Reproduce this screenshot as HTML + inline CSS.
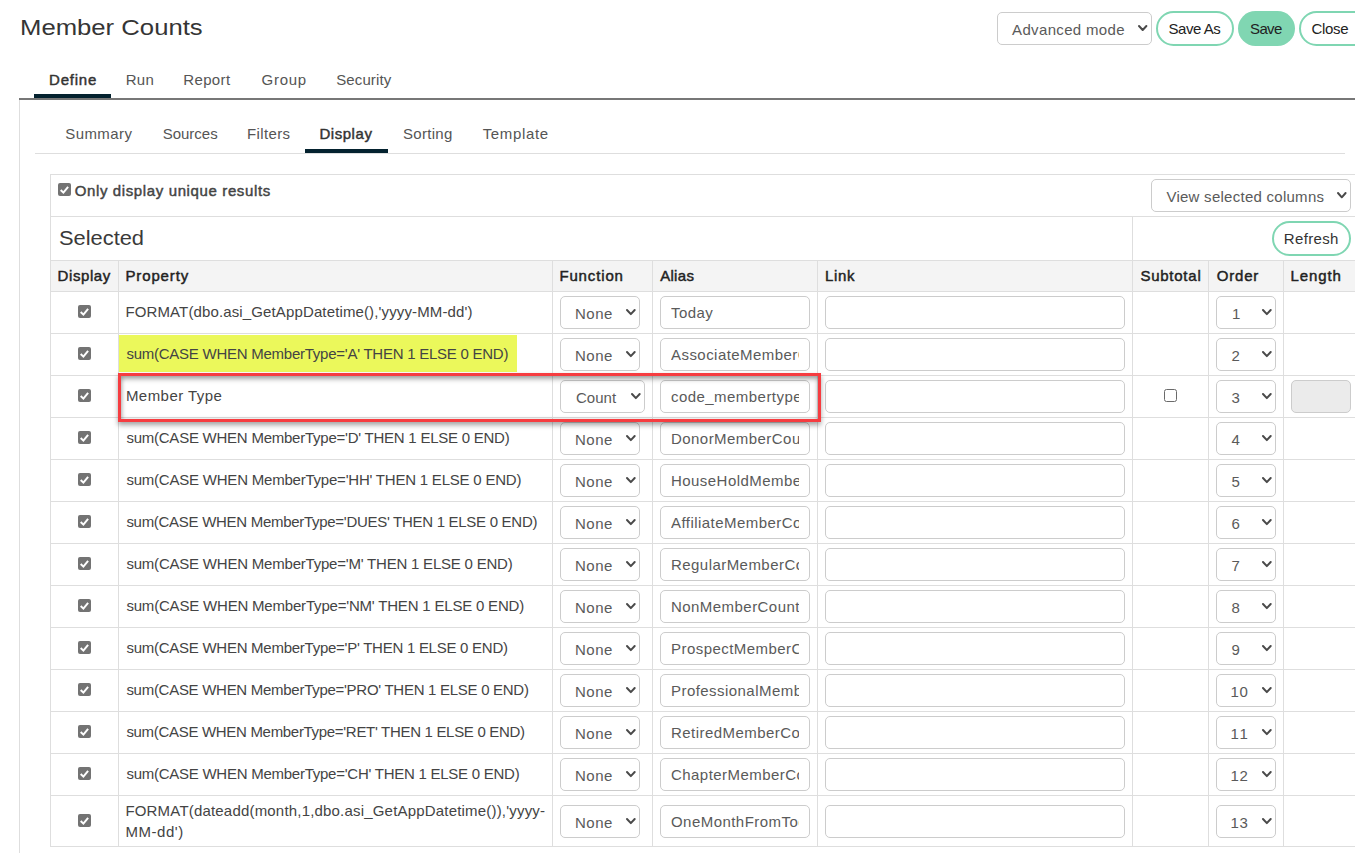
<!DOCTYPE html>
<html><head><meta charset="utf-8"><style>
html,body{margin:0;padding:0;background:#fff;}
body{width:1355px;height:862px;overflow:hidden;position:relative;font-family:"Liberation Sans", sans-serif;}
.t{position:absolute;white-space:nowrap;}
.r{position:absolute;}
</style></head><body>
<div class="t" style="left:19.83px;top:17px;font-size:22px;line-height:22px;font-weight:400;color:#353535;letter-spacing:0.000px;transform:scaleX(1.1672);transform-origin:0px 0;">Member Counts</div>
<div class="r" style="left:997px;top:12px;width:155px;height:33px;border:1px solid #cccccc;border-radius:5px;box-sizing:border-box;background:#fff"></div>
<div class="t" style="left:1012.10px;top:22px;font-size:15px;line-height:15px;font-weight:400;color:#5a5a5a;letter-spacing:0.336px;">Advanced mode</div>
<svg class="r" style="left:1136.30px;top:23.20px" width="13.40" height="10.00" viewBox="0 0 13.40 10.00"><path d="M3.00 3.00 L6.70 7.00 L10.40 3.00" fill="none" stroke="#4a4a4a" stroke-width="2.0" stroke-linecap="round" stroke-linejoin="round"/></svg>
<div class="r" style="left:1156px;top:11px;width:78px;height:35px;border:2px solid #7fd6b2;border-radius:18px;box-sizing:border-box;background:#fff"></div>
<div class="t" style="left:1168.50px;top:21px;font-size:15px;line-height:15px;font-weight:400;color:#222;letter-spacing:-0.444px;">Save As</div>
<div class="r" style="left:1238px;top:11px;width:57px;height:35px;border-radius:18px;background:#80d6b2"></div>
<div class="t" style="left:1250.00px;top:21px;font-size:15px;line-height:15px;font-weight:400;color:#222;letter-spacing:-0.616px;">Save</div>
<div class="r" style="left:1299px;top:11px;width:90px;height:35px;border:2px solid #7fd6b2;border-radius:18px;box-sizing:border-box;background:#fff"></div>
<div class="t" style="left:1311.60px;top:21px;font-size:15px;line-height:15px;font-weight:400;color:#222;letter-spacing:-0.327px;">Close</div>
<div class="t" style="left:49.10px;top:72px;font-size:15px;line-height:15px;font-weight:400;color:#333;letter-spacing:0.757px;-webkit-text-stroke:0.45px #333;">Define</div>
<div class="t" style="left:125.70px;top:72px;font-size:15px;line-height:15px;font-weight:400;color:#555;letter-spacing:0.263px;">Run</div>
<div class="t" style="left:183.20px;top:72px;font-size:15px;line-height:15px;font-weight:400;color:#555;letter-spacing:0.389px;">Report</div>
<div class="t" style="left:261.60px;top:72px;font-size:15px;line-height:15px;font-weight:400;color:#555;letter-spacing:0.688px;">Group</div>
<div class="t" style="left:336.20px;top:72px;font-size:15px;line-height:15px;font-weight:400;color:#555;letter-spacing:0.116px;">Security</div>
<div class="r" style="left:34px;top:94px;width:77px;height:4px;background:#04222f"></div>
<div class="r" style="left:19px;top:98px;width:1336px;height:2px;background:#777"></div>
<div class="r" style="left:19px;top:100px;width:1px;height:753px;background:#dedede"></div>
<div class="t" style="left:65.30px;top:126px;font-size:15px;line-height:15px;font-weight:400;color:#555;letter-spacing:0.404px;">Summary</div>
<div class="t" style="left:162.70px;top:126px;font-size:15px;line-height:15px;font-weight:400;color:#555;letter-spacing:-0.004px;">Sources</div>
<div class="t" style="left:247.00px;top:126px;font-size:15px;line-height:15px;font-weight:400;color:#555;letter-spacing:0.378px;">Filters</div>
<div class="t" style="left:319.40px;top:126px;font-size:15px;line-height:15px;font-weight:400;color:#333;letter-spacing:0.553px;-webkit-text-stroke:0.45px #333;">Display</div>
<div class="t" style="left:403.00px;top:126px;font-size:15px;line-height:15px;font-weight:400;color:#555;letter-spacing:0.303px;">Sorting</div>
<div class="t" style="left:482.70px;top:126px;font-size:15px;line-height:15px;font-weight:400;color:#555;letter-spacing:0.654px;">Template</div>
<div class="r" style="left:305px;top:149px;width:83px;height:4px;background:#04222f"></div>
<div class="r" style="left:35px;top:153px;width:1310px;height:1px;background:#dedede"></div>
<div class="r" style="left:50px;top:174px;width:1305px;height:1px;background:#dedede"></div>
<div class="r" style="left:50px;top:174px;width:1px;height:673px;background:#dedede"></div>
<svg class="r" style="left:58px;top:183px" width="13" height="13" viewBox="0 0 13 13"><rect x="0" y="0" width="13" height="13" rx="2" fill="#737373"/><path d="M2.7 7.0 L5.4 9.6 L10.1 3.8" fill="none" stroke="#fff" stroke-width="2"/></svg>
<div class="t" style="left:74.70px;top:183px;font-size:15px;line-height:15px;font-weight:400;color:#444;letter-spacing:0.625px;-webkit-text-stroke:0.45px #444;">Only display unique results</div>
<div class="r" style="left:1151px;top:179px;width:200px;height:33px;border:1px solid #cccccc;border-radius:5px;box-sizing:border-box;background:#fff"></div>
<div class="t" style="left:1166.40px;top:189px;font-size:15px;line-height:15px;font-weight:400;color:#5a5a5a;letter-spacing:0.265px;">View selected columns</div>
<svg class="r" style="left:1335.20px;top:189.50px" width="13.60" height="10.30" viewBox="0 0 13.60 10.30"><path d="M3.00 3.00 L6.80 7.30 L10.60 3.00" fill="none" stroke="#4a4a4a" stroke-width="2.0" stroke-linecap="round" stroke-linejoin="round"/></svg>
<div class="r" style="left:50px;top:216px;width:1305px;height:1px;background:#dedede"></div>
<div class="t" style="left:58.60px;top:228px;font-size:20px;line-height:20px;font-weight:400;color:#3a3a3a;letter-spacing:0.000px;transform:scaleX(1.0924);transform-origin:0px 0;">Selected</div>
<div class="r" style="left:1132px;top:216px;width:1px;height:44px;background:#dedede"></div>
<div class="r" style="left:1272px;top:221px;width:79px;height:35px;border:2px solid #7fd6b2;border-radius:18px;box-sizing:border-box;background:#fff"></div>
<div class="t" style="left:1283.80px;top:231px;font-size:15px;line-height:15px;font-weight:400;color:#333;letter-spacing:0.353px;">Refresh</div>
<div class="r" style="left:50px;top:260px;width:1305px;height:1px;background:#dedede"></div>
<div class="r" style="left:51px;top:261px;width:1304px;height:30px;background:#f4f4f4"></div>
<div class="t" style="left:57.60px;top:268px;font-size:15px;line-height:15px;font-weight:400;color:#222;letter-spacing:0.586px;-webkit-text-stroke:0.45px #222;">Display</div>
<div class="t" style="left:125.40px;top:268px;font-size:15px;line-height:15px;font-weight:400;color:#222;letter-spacing:0.887px;-webkit-text-stroke:0.45px #222;">Property</div>
<div class="t" style="left:559.40px;top:268px;font-size:15px;line-height:15px;font-weight:400;color:#222;letter-spacing:0.859px;-webkit-text-stroke:0.45px #222;">Function</div>
<div class="t" style="left:660.20px;top:268px;font-size:15px;line-height:15px;font-weight:400;color:#222;letter-spacing:0.297px;-webkit-text-stroke:0.45px #222;">Alias</div>
<div class="t" style="left:824.90px;top:268px;font-size:15px;line-height:15px;font-weight:400;color:#222;letter-spacing:0.728px;-webkit-text-stroke:0.45px #222;">Link</div>
<div class="t" style="left:1140.40px;top:268px;font-size:15px;line-height:15px;font-weight:400;color:#222;letter-spacing:0.756px;-webkit-text-stroke:0.45px #222;">Subtotal</div>
<div class="t" style="left:1216.70px;top:268px;font-size:15px;line-height:15px;font-weight:400;color:#222;letter-spacing:0.813px;-webkit-text-stroke:0.45px #222;">Order</div>
<div class="t" style="left:1290.40px;top:268px;font-size:15px;line-height:15px;font-weight:400;color:#222;letter-spacing:0.933px;-webkit-text-stroke:0.45px #222;">Length</div>
<div class="r" style="left:50px;top:291px;width:1305px;height:1px;background:#dedede"></div>
<div class="r" style="left:50px;top:333px;width:1305px;height:1px;background:#dedede"></div>
<div class="r" style="left:50px;top:375px;width:1305px;height:1px;background:#dedede"></div>
<div class="r" style="left:50px;top:417px;width:1305px;height:1px;background:#dedede"></div>
<div class="r" style="left:50px;top:459px;width:1305px;height:1px;background:#dedede"></div>
<div class="r" style="left:50px;top:501px;width:1305px;height:1px;background:#dedede"></div>
<div class="r" style="left:50px;top:543px;width:1305px;height:1px;background:#dedede"></div>
<div class="r" style="left:50px;top:585px;width:1305px;height:1px;background:#dedede"></div>
<div class="r" style="left:50px;top:627px;width:1305px;height:1px;background:#dedede"></div>
<div class="r" style="left:50px;top:669px;width:1305px;height:1px;background:#dedede"></div>
<div class="r" style="left:50px;top:711px;width:1305px;height:1px;background:#dedede"></div>
<div class="r" style="left:50px;top:753px;width:1305px;height:1px;background:#dedede"></div>
<div class="r" style="left:50px;top:795px;width:1305px;height:1px;background:#dedede"></div>
<div class="r" style="left:50px;top:846px;width:1305px;height:1px;background:#dedede"></div>
<div class="r" style="left:118px;top:261px;width:1px;height:585px;background:#dedede"></div>
<div class="r" style="left:552px;top:261px;width:1px;height:585px;background:#dedede"></div>
<div class="r" style="left:652px;top:261px;width:1px;height:585px;background:#dedede"></div>
<div class="r" style="left:817px;top:261px;width:1px;height:585px;background:#dedede"></div>
<div class="r" style="left:1132px;top:261px;width:1px;height:585px;background:#dedede"></div>
<div class="r" style="left:1208px;top:261px;width:1px;height:585px;background:#dedede"></div>
<div class="r" style="left:1283px;top:261px;width:1px;height:585px;background:#dedede"></div>
<svg class="r" style="left:78px;top:305px" width="13" height="13" viewBox="0 0 13 13"><rect x="0" y="0" width="13" height="13" rx="2" fill="#737373"/><path d="M2.7 7.0 L5.4 9.6 L10.1 3.8" fill="none" stroke="#fff" stroke-width="2"/></svg>
<div class="t" style="left:125.40px;top:304px;font-size:15px;line-height:15px;font-weight:400;color:#444;letter-spacing:0.131px;">FORMAT(dbo.asi_GetAppDatetime(),'yyyy-MM-dd')</div>
<div class="r" style="left:560px;top:296px;width:80px;height:33px;border:1px solid #cccccc;border-radius:5px;box-sizing:border-box;background:#fff"></div>
<div class="t" style="left:574.90px;top:306px;font-size:15px;line-height:15px;font-weight:400;color:#5a5a5a;letter-spacing:0.561px;">None</div>
<svg class="r" style="left:624.20px;top:307.00px" width="13.70" height="10.10" viewBox="0 0 13.70 10.10"><path d="M3.00 3.00 L6.85 7.10 L10.70 3.00" fill="none" stroke="#4a4a4a" stroke-width="2.0" stroke-linecap="round" stroke-linejoin="round"/></svg>
<div class="r" style="left:660px;top:296px;width:150px;height:33px;border:1px solid #cccccc;border-radius:5px;box-sizing:border-box;background:#fff"></div>
<div class="t" style="left:671px;top:305px;width:128px;height:20px;overflow:hidden;font-size:15px;line-height:15px;color:#5a5a5a;letter-spacing:0.45px">Today</div>
<div class="r" style="left:825px;top:296px;width:300px;height:33px;border:1px solid #cccccc;border-radius:5px;box-sizing:border-box;background:#fff"></div>
<div class="r" style="left:1216px;top:296px;width:60px;height:33px;border:1px solid #cccccc;border-radius:5px;box-sizing:border-box;background:#fff"></div>
<div class="t" style="left:1232.00px;top:306px;font-size:15px;line-height:15px;font-weight:400;color:#5a5a5a;letter-spacing:0.000px;">1</div>
<svg class="r" style="left:1260.10px;top:307.00px" width="13.70" height="10.10" viewBox="0 0 13.70 10.10"><path d="M3.00 3.00 L6.85 7.10 L10.70 3.00" fill="none" stroke="#4a4a4a" stroke-width="2.0" stroke-linecap="round" stroke-linejoin="round"/></svg>
<svg class="r" style="left:78px;top:347px" width="13" height="13" viewBox="0 0 13 13"><rect x="0" y="0" width="13" height="13" rx="2" fill="#737373"/><path d="M2.7 7.0 L5.4 9.6 L10.1 3.8" fill="none" stroke="#fff" stroke-width="2"/></svg>
<div class="r" style="left:119px;top:335px;width:398px;height:37px;background:#ebf85b"></div>
<div class="t" style="left:126.40px;top:346px;font-size:15px;line-height:15px;font-weight:400;color:#444;letter-spacing:-0.249px;">sum(CASE WHEN MemberType='A' THEN 1 ELSE 0 END)</div>
<div class="r" style="left:560px;top:338px;width:80px;height:33px;border:1px solid #cccccc;border-radius:5px;box-sizing:border-box;background:#fff"></div>
<div class="t" style="left:574.90px;top:348px;font-size:15px;line-height:15px;font-weight:400;color:#5a5a5a;letter-spacing:0.561px;">None</div>
<svg class="r" style="left:624.20px;top:349.00px" width="13.70" height="10.10" viewBox="0 0 13.70 10.10"><path d="M3.00 3.00 L6.85 7.10 L10.70 3.00" fill="none" stroke="#4a4a4a" stroke-width="2.0" stroke-linecap="round" stroke-linejoin="round"/></svg>
<div class="r" style="left:660px;top:338px;width:150px;height:33px;border:1px solid #cccccc;border-radius:5px;box-sizing:border-box;background:#fff"></div>
<div class="t" style="left:671px;top:347px;width:128px;height:20px;overflow:hidden;font-size:15px;line-height:15px;color:#5a5a5a;letter-spacing:0.45px">AssociateMemberCount</div>
<div class="r" style="left:825px;top:338px;width:300px;height:33px;border:1px solid #cccccc;border-radius:5px;box-sizing:border-box;background:#fff"></div>
<div class="r" style="left:1216px;top:338px;width:60px;height:33px;border:1px solid #cccccc;border-radius:5px;box-sizing:border-box;background:#fff"></div>
<div class="t" style="left:1231.50px;top:348px;font-size:15px;line-height:15px;font-weight:400;color:#5a5a5a;letter-spacing:0.000px;">2</div>
<svg class="r" style="left:1260.10px;top:349.00px" width="13.70" height="10.10" viewBox="0 0 13.70 10.10"><path d="M3.00 3.00 L6.85 7.10 L10.70 3.00" fill="none" stroke="#4a4a4a" stroke-width="2.0" stroke-linecap="round" stroke-linejoin="round"/></svg>
<svg class="r" style="left:78px;top:389px" width="13" height="13" viewBox="0 0 13 13"><rect x="0" y="0" width="13" height="13" rx="2" fill="#737373"/><path d="M2.7 7.0 L5.4 9.6 L10.1 3.8" fill="none" stroke="#fff" stroke-width="2"/></svg>
<div class="t" style="left:125.90px;top:388px;font-size:15px;line-height:15px;font-weight:400;color:#444;letter-spacing:0.464px;">Member Type</div>
<div class="r" style="left:560px;top:380px;width:85px;height:33px;border:1px solid #cccccc;border-radius:5px;box-sizing:border-box;background:#fff"></div>
<div class="t" style="left:575.90px;top:390px;font-size:15px;line-height:15px;font-weight:400;color:#5a5a5a;letter-spacing:0.060px;">Count</div>
<svg class="r" style="left:629.20px;top:391.00px" width="13.70" height="10.10" viewBox="0 0 13.70 10.10"><path d="M3.00 3.00 L6.85 7.10 L10.70 3.00" fill="none" stroke="#4a4a4a" stroke-width="2.0" stroke-linecap="round" stroke-linejoin="round"/></svg>
<div class="r" style="left:660px;top:380px;width:150px;height:33px;border:1px solid #cccccc;border-radius:5px;box-sizing:border-box;background:#fff"></div>
<div class="t" style="left:671px;top:389px;width:128px;height:20px;overflow:hidden;font-size:15px;line-height:15px;color:#5a5a5a;letter-spacing:0.45px">code_membertype</div>
<div class="r" style="left:825px;top:380px;width:300px;height:33px;border:1px solid #cccccc;border-radius:5px;box-sizing:border-box;background:#fff"></div>
<svg class="r" style="left:1164px;top:389px" width="13" height="13" viewBox="0 0 13 13"><rect x="0.5" y="0.5" width="12" height="12" rx="2" fill="#fff" stroke="#6a6a6a" stroke-width="1"/></svg>
<div class="r" style="left:1291px;top:380px;width:60px;height:33px;border:1px solid #cccccc;border-radius:5px;box-sizing:border-box;background:#ebebeb"></div>
<div class="r" style="left:1216px;top:380px;width:60px;height:33px;border:1px solid #cccccc;border-radius:5px;box-sizing:border-box;background:#fff"></div>
<div class="t" style="left:1231.50px;top:390px;font-size:15px;line-height:15px;font-weight:400;color:#5a5a5a;letter-spacing:0.000px;">3</div>
<svg class="r" style="left:1260.10px;top:391.00px" width="13.70" height="10.10" viewBox="0 0 13.70 10.10"><path d="M3.00 3.00 L6.85 7.10 L10.70 3.00" fill="none" stroke="#4a4a4a" stroke-width="2.0" stroke-linecap="round" stroke-linejoin="round"/></svg>
<svg class="r" style="left:78px;top:431px" width="13" height="13" viewBox="0 0 13 13"><rect x="0" y="0" width="13" height="13" rx="2" fill="#737373"/><path d="M2.7 7.0 L5.4 9.6 L10.1 3.8" fill="none" stroke="#fff" stroke-width="2"/></svg>
<div class="t" style="left:126.40px;top:430px;font-size:15px;line-height:15px;font-weight:400;color:#444;letter-spacing:-0.239px;">sum(CASE WHEN MemberType='D' THEN 1 ELSE 0 END)</div>
<div class="r" style="left:560px;top:422px;width:80px;height:33px;border:1px solid #cccccc;border-radius:5px;box-sizing:border-box;background:#fff"></div>
<div class="t" style="left:574.90px;top:432px;font-size:15px;line-height:15px;font-weight:400;color:#5a5a5a;letter-spacing:0.561px;">None</div>
<svg class="r" style="left:624.20px;top:433.00px" width="13.70" height="10.10" viewBox="0 0 13.70 10.10"><path d="M3.00 3.00 L6.85 7.10 L10.70 3.00" fill="none" stroke="#4a4a4a" stroke-width="2.0" stroke-linecap="round" stroke-linejoin="round"/></svg>
<div class="r" style="left:660px;top:422px;width:150px;height:33px;border:1px solid #cccccc;border-radius:5px;box-sizing:border-box;background:#fff"></div>
<div class="t" style="left:671px;top:431px;width:128px;height:20px;overflow:hidden;font-size:15px;line-height:15px;color:#5a5a5a;letter-spacing:0.45px">DonorMemberCount</div>
<div class="r" style="left:825px;top:422px;width:300px;height:33px;border:1px solid #cccccc;border-radius:5px;box-sizing:border-box;background:#fff"></div>
<div class="r" style="left:1216px;top:422px;width:60px;height:33px;border:1px solid #cccccc;border-radius:5px;box-sizing:border-box;background:#fff"></div>
<div class="t" style="left:1231.50px;top:432px;font-size:15px;line-height:15px;font-weight:400;color:#5a5a5a;letter-spacing:0.000px;">4</div>
<svg class="r" style="left:1260.10px;top:433.00px" width="13.70" height="10.10" viewBox="0 0 13.70 10.10"><path d="M3.00 3.00 L6.85 7.10 L10.70 3.00" fill="none" stroke="#4a4a4a" stroke-width="2.0" stroke-linecap="round" stroke-linejoin="round"/></svg>
<svg class="r" style="left:78px;top:473px" width="13" height="13" viewBox="0 0 13 13"><rect x="0" y="0" width="13" height="13" rx="2" fill="#737373"/><path d="M2.7 7.0 L5.4 9.6 L10.1 3.8" fill="none" stroke="#fff" stroke-width="2"/></svg>
<div class="t" style="left:126.40px;top:472px;font-size:15px;line-height:15px;font-weight:400;color:#444;letter-spacing:-0.215px;">sum(CASE WHEN MemberType='HH' THEN 1 ELSE 0 END)</div>
<div class="r" style="left:560px;top:464px;width:80px;height:33px;border:1px solid #cccccc;border-radius:5px;box-sizing:border-box;background:#fff"></div>
<div class="t" style="left:574.90px;top:474px;font-size:15px;line-height:15px;font-weight:400;color:#5a5a5a;letter-spacing:0.561px;">None</div>
<svg class="r" style="left:624.20px;top:475.00px" width="13.70" height="10.10" viewBox="0 0 13.70 10.10"><path d="M3.00 3.00 L6.85 7.10 L10.70 3.00" fill="none" stroke="#4a4a4a" stroke-width="2.0" stroke-linecap="round" stroke-linejoin="round"/></svg>
<div class="r" style="left:660px;top:464px;width:150px;height:33px;border:1px solid #cccccc;border-radius:5px;box-sizing:border-box;background:#fff"></div>
<div class="t" style="left:671px;top:473px;width:128px;height:20px;overflow:hidden;font-size:15px;line-height:15px;color:#5a5a5a;letter-spacing:0.45px">HouseHoldMemberCount</div>
<div class="r" style="left:825px;top:464px;width:300px;height:33px;border:1px solid #cccccc;border-radius:5px;box-sizing:border-box;background:#fff"></div>
<div class="r" style="left:1216px;top:464px;width:60px;height:33px;border:1px solid #cccccc;border-radius:5px;box-sizing:border-box;background:#fff"></div>
<div class="t" style="left:1231.50px;top:474px;font-size:15px;line-height:15px;font-weight:400;color:#5a5a5a;letter-spacing:0.000px;">5</div>
<svg class="r" style="left:1260.10px;top:475.00px" width="13.70" height="10.10" viewBox="0 0 13.70 10.10"><path d="M3.00 3.00 L6.85 7.10 L10.70 3.00" fill="none" stroke="#4a4a4a" stroke-width="2.0" stroke-linecap="round" stroke-linejoin="round"/></svg>
<svg class="r" style="left:78px;top:515px" width="13" height="13" viewBox="0 0 13 13"><rect x="0" y="0" width="13" height="13" rx="2" fill="#737373"/><path d="M2.7 7.0 L5.4 9.6 L10.1 3.8" fill="none" stroke="#fff" stroke-width="2"/></svg>
<div class="t" style="left:126.40px;top:514px;font-size:15px;line-height:15px;font-weight:400;color:#444;letter-spacing:-0.288px;">sum(CASE WHEN MemberType='DUES' THEN 1 ELSE 0 END)</div>
<div class="r" style="left:560px;top:506px;width:80px;height:33px;border:1px solid #cccccc;border-radius:5px;box-sizing:border-box;background:#fff"></div>
<div class="t" style="left:574.90px;top:516px;font-size:15px;line-height:15px;font-weight:400;color:#5a5a5a;letter-spacing:0.561px;">None</div>
<svg class="r" style="left:624.20px;top:517.00px" width="13.70" height="10.10" viewBox="0 0 13.70 10.10"><path d="M3.00 3.00 L6.85 7.10 L10.70 3.00" fill="none" stroke="#4a4a4a" stroke-width="2.0" stroke-linecap="round" stroke-linejoin="round"/></svg>
<div class="r" style="left:660px;top:506px;width:150px;height:33px;border:1px solid #cccccc;border-radius:5px;box-sizing:border-box;background:#fff"></div>
<div class="t" style="left:671px;top:515px;width:128px;height:20px;overflow:hidden;font-size:15px;line-height:15px;color:#5a5a5a;letter-spacing:0.45px">AffiliateMemberCount</div>
<div class="r" style="left:825px;top:506px;width:300px;height:33px;border:1px solid #cccccc;border-radius:5px;box-sizing:border-box;background:#fff"></div>
<div class="r" style="left:1216px;top:506px;width:60px;height:33px;border:1px solid #cccccc;border-radius:5px;box-sizing:border-box;background:#fff"></div>
<div class="t" style="left:1231.50px;top:516px;font-size:15px;line-height:15px;font-weight:400;color:#5a5a5a;letter-spacing:0.000px;">6</div>
<svg class="r" style="left:1260.10px;top:517.00px" width="13.70" height="10.10" viewBox="0 0 13.70 10.10"><path d="M3.00 3.00 L6.85 7.10 L10.70 3.00" fill="none" stroke="#4a4a4a" stroke-width="2.0" stroke-linecap="round" stroke-linejoin="round"/></svg>
<svg class="r" style="left:78px;top:557px" width="13" height="13" viewBox="0 0 13 13"><rect x="0" y="0" width="13" height="13" rx="2" fill="#737373"/><path d="M2.7 7.0 L5.4 9.6 L10.1 3.8" fill="none" stroke="#fff" stroke-width="2"/></svg>
<div class="t" style="left:126.40px;top:556px;font-size:15px;line-height:15px;font-weight:400;color:#444;letter-spacing:-0.210px;">sum(CASE WHEN MemberType='M' THEN 1 ELSE 0 END)</div>
<div class="r" style="left:560px;top:548px;width:80px;height:33px;border:1px solid #cccccc;border-radius:5px;box-sizing:border-box;background:#fff"></div>
<div class="t" style="left:574.90px;top:558px;font-size:15px;line-height:15px;font-weight:400;color:#5a5a5a;letter-spacing:0.561px;">None</div>
<svg class="r" style="left:624.20px;top:559.00px" width="13.70" height="10.10" viewBox="0 0 13.70 10.10"><path d="M3.00 3.00 L6.85 7.10 L10.70 3.00" fill="none" stroke="#4a4a4a" stroke-width="2.0" stroke-linecap="round" stroke-linejoin="round"/></svg>
<div class="r" style="left:660px;top:548px;width:150px;height:33px;border:1px solid #cccccc;border-radius:5px;box-sizing:border-box;background:#fff"></div>
<div class="t" style="left:671px;top:557px;width:128px;height:20px;overflow:hidden;font-size:15px;line-height:15px;color:#5a5a5a;letter-spacing:0.45px">RegularMemberCount</div>
<div class="r" style="left:825px;top:548px;width:300px;height:33px;border:1px solid #cccccc;border-radius:5px;box-sizing:border-box;background:#fff"></div>
<div class="r" style="left:1216px;top:548px;width:60px;height:33px;border:1px solid #cccccc;border-radius:5px;box-sizing:border-box;background:#fff"></div>
<div class="t" style="left:1231.50px;top:558px;font-size:15px;line-height:15px;font-weight:400;color:#5a5a5a;letter-spacing:0.000px;">7</div>
<svg class="r" style="left:1260.10px;top:559.00px" width="13.70" height="10.10" viewBox="0 0 13.70 10.10"><path d="M3.00 3.00 L6.85 7.10 L10.70 3.00" fill="none" stroke="#4a4a4a" stroke-width="2.0" stroke-linecap="round" stroke-linejoin="round"/></svg>
<svg class="r" style="left:78px;top:599px" width="13" height="13" viewBox="0 0 13 13"><rect x="0" y="0" width="13" height="13" rx="2" fill="#737373"/><path d="M2.7 7.0 L5.4 9.6 L10.1 3.8" fill="none" stroke="#fff" stroke-width="2"/></svg>
<div class="t" style="left:126.40px;top:598px;font-size:15px;line-height:15px;font-weight:400;color:#444;letter-spacing:-0.191px;">sum(CASE WHEN MemberType='NM' THEN 1 ELSE 0 END)</div>
<div class="r" style="left:560px;top:590px;width:80px;height:33px;border:1px solid #cccccc;border-radius:5px;box-sizing:border-box;background:#fff"></div>
<div class="t" style="left:574.90px;top:600px;font-size:15px;line-height:15px;font-weight:400;color:#5a5a5a;letter-spacing:0.561px;">None</div>
<svg class="r" style="left:624.20px;top:601.00px" width="13.70" height="10.10" viewBox="0 0 13.70 10.10"><path d="M3.00 3.00 L6.85 7.10 L10.70 3.00" fill="none" stroke="#4a4a4a" stroke-width="2.0" stroke-linecap="round" stroke-linejoin="round"/></svg>
<div class="r" style="left:660px;top:590px;width:150px;height:33px;border:1px solid #cccccc;border-radius:5px;box-sizing:border-box;background:#fff"></div>
<div class="t" style="left:671px;top:599px;width:128px;height:20px;overflow:hidden;font-size:15px;line-height:15px;color:#5a5a5a;letter-spacing:0.45px">NonMemberCount</div>
<div class="r" style="left:825px;top:590px;width:300px;height:33px;border:1px solid #cccccc;border-radius:5px;box-sizing:border-box;background:#fff"></div>
<div class="r" style="left:1216px;top:590px;width:60px;height:33px;border:1px solid #cccccc;border-radius:5px;box-sizing:border-box;background:#fff"></div>
<div class="t" style="left:1231.50px;top:600px;font-size:15px;line-height:15px;font-weight:400;color:#5a5a5a;letter-spacing:0.000px;">8</div>
<svg class="r" style="left:1260.10px;top:601.00px" width="13.70" height="10.10" viewBox="0 0 13.70 10.10"><path d="M3.00 3.00 L6.85 7.10 L10.70 3.00" fill="none" stroke="#4a4a4a" stroke-width="2.0" stroke-linecap="round" stroke-linejoin="round"/></svg>
<svg class="r" style="left:78px;top:641px" width="13" height="13" viewBox="0 0 13 13"><rect x="0" y="0" width="13" height="13" rx="2" fill="#737373"/><path d="M2.7 7.0 L5.4 9.6 L10.1 3.8" fill="none" stroke="#fff" stroke-width="2"/></svg>
<div class="t" style="left:126.40px;top:640px;font-size:15px;line-height:15px;font-weight:400;color:#444;letter-spacing:-0.258px;">sum(CASE WHEN MemberType='P' THEN 1 ELSE 0 END)</div>
<div class="r" style="left:560px;top:632px;width:80px;height:33px;border:1px solid #cccccc;border-radius:5px;box-sizing:border-box;background:#fff"></div>
<div class="t" style="left:574.90px;top:642px;font-size:15px;line-height:15px;font-weight:400;color:#5a5a5a;letter-spacing:0.561px;">None</div>
<svg class="r" style="left:624.20px;top:643.00px" width="13.70" height="10.10" viewBox="0 0 13.70 10.10"><path d="M3.00 3.00 L6.85 7.10 L10.70 3.00" fill="none" stroke="#4a4a4a" stroke-width="2.0" stroke-linecap="round" stroke-linejoin="round"/></svg>
<div class="r" style="left:660px;top:632px;width:150px;height:33px;border:1px solid #cccccc;border-radius:5px;box-sizing:border-box;background:#fff"></div>
<div class="t" style="left:671px;top:641px;width:128px;height:20px;overflow:hidden;font-size:15px;line-height:15px;color:#5a5a5a;letter-spacing:0.45px">ProspectMemberCount</div>
<div class="r" style="left:825px;top:632px;width:300px;height:33px;border:1px solid #cccccc;border-radius:5px;box-sizing:border-box;background:#fff"></div>
<div class="r" style="left:1216px;top:632px;width:60px;height:33px;border:1px solid #cccccc;border-radius:5px;box-sizing:border-box;background:#fff"></div>
<div class="t" style="left:1231.50px;top:642px;font-size:15px;line-height:15px;font-weight:400;color:#5a5a5a;letter-spacing:0.000px;">9</div>
<svg class="r" style="left:1260.10px;top:643.00px" width="13.70" height="10.10" viewBox="0 0 13.70 10.10"><path d="M3.00 3.00 L6.85 7.10 L10.70 3.00" fill="none" stroke="#4a4a4a" stroke-width="2.0" stroke-linecap="round" stroke-linejoin="round"/></svg>
<svg class="r" style="left:78px;top:683px" width="13" height="13" viewBox="0 0 13 13"><rect x="0" y="0" width="13" height="13" rx="2" fill="#737373"/><path d="M2.7 7.0 L5.4 9.6 L10.1 3.8" fill="none" stroke="#fff" stroke-width="2"/></svg>
<div class="t" style="left:126.40px;top:682px;font-size:15px;line-height:15px;font-weight:400;color:#444;letter-spacing:-0.280px;">sum(CASE WHEN MemberType='PRO' THEN 1 ELSE 0 END)</div>
<div class="r" style="left:560px;top:674px;width:80px;height:33px;border:1px solid #cccccc;border-radius:5px;box-sizing:border-box;background:#fff"></div>
<div class="t" style="left:574.90px;top:684px;font-size:15px;line-height:15px;font-weight:400;color:#5a5a5a;letter-spacing:0.561px;">None</div>
<svg class="r" style="left:624.20px;top:685.00px" width="13.70" height="10.10" viewBox="0 0 13.70 10.10"><path d="M3.00 3.00 L6.85 7.10 L10.70 3.00" fill="none" stroke="#4a4a4a" stroke-width="2.0" stroke-linecap="round" stroke-linejoin="round"/></svg>
<div class="r" style="left:660px;top:674px;width:150px;height:33px;border:1px solid #cccccc;border-radius:5px;box-sizing:border-box;background:#fff"></div>
<div class="t" style="left:671px;top:683px;width:128px;height:20px;overflow:hidden;font-size:15px;line-height:15px;color:#5a5a5a;letter-spacing:0.45px">ProfessionalMemberCount</div>
<div class="r" style="left:825px;top:674px;width:300px;height:33px;border:1px solid #cccccc;border-radius:5px;box-sizing:border-box;background:#fff"></div>
<div class="r" style="left:1216px;top:674px;width:60px;height:33px;border:1px solid #cccccc;border-radius:5px;box-sizing:border-box;background:#fff"></div>
<div class="t" style="left:1230.50px;top:684px;font-size:15px;line-height:15px;font-weight:400;color:#5a5a5a;letter-spacing:0.758px;">10</div>
<svg class="r" style="left:1260.10px;top:685.00px" width="13.70" height="10.10" viewBox="0 0 13.70 10.10"><path d="M3.00 3.00 L6.85 7.10 L10.70 3.00" fill="none" stroke="#4a4a4a" stroke-width="2.0" stroke-linecap="round" stroke-linejoin="round"/></svg>
<svg class="r" style="left:78px;top:725px" width="13" height="13" viewBox="0 0 13 13"><rect x="0" y="0" width="13" height="13" rx="2" fill="#737373"/><path d="M2.7 7.0 L5.4 9.6 L10.1 3.8" fill="none" stroke="#fff" stroke-width="2"/></svg>
<div class="t" style="left:126.40px;top:724px;font-size:15px;line-height:15px;font-weight:400;color:#444;letter-spacing:-0.309px;">sum(CASE WHEN MemberType='RET' THEN 1 ELSE 0 END)</div>
<div class="r" style="left:560px;top:716px;width:80px;height:33px;border:1px solid #cccccc;border-radius:5px;box-sizing:border-box;background:#fff"></div>
<div class="t" style="left:574.90px;top:726px;font-size:15px;line-height:15px;font-weight:400;color:#5a5a5a;letter-spacing:0.561px;">None</div>
<svg class="r" style="left:624.20px;top:727.00px" width="13.70" height="10.10" viewBox="0 0 13.70 10.10"><path d="M3.00 3.00 L6.85 7.10 L10.70 3.00" fill="none" stroke="#4a4a4a" stroke-width="2.0" stroke-linecap="round" stroke-linejoin="round"/></svg>
<div class="r" style="left:660px;top:716px;width:150px;height:33px;border:1px solid #cccccc;border-radius:5px;box-sizing:border-box;background:#fff"></div>
<div class="t" style="left:671px;top:725px;width:128px;height:20px;overflow:hidden;font-size:15px;line-height:15px;color:#5a5a5a;letter-spacing:0.45px">RetiredMemberCount</div>
<div class="r" style="left:825px;top:716px;width:300px;height:33px;border:1px solid #cccccc;border-radius:5px;box-sizing:border-box;background:#fff"></div>
<div class="r" style="left:1216px;top:716px;width:60px;height:33px;border:1px solid #cccccc;border-radius:5px;box-sizing:border-box;background:#fff"></div>
<div class="t" style="left:1230.50px;top:726px;font-size:15px;line-height:15px;font-weight:400;color:#5a5a5a;letter-spacing:1.871px;">11</div>
<svg class="r" style="left:1260.10px;top:727.00px" width="13.70" height="10.10" viewBox="0 0 13.70 10.10"><path d="M3.00 3.00 L6.85 7.10 L10.70 3.00" fill="none" stroke="#4a4a4a" stroke-width="2.0" stroke-linecap="round" stroke-linejoin="round"/></svg>
<svg class="r" style="left:78px;top:767px" width="13" height="13" viewBox="0 0 13 13"><rect x="0" y="0" width="13" height="13" rx="2" fill="#737373"/><path d="M2.7 7.0 L5.4 9.6 L10.1 3.8" fill="none" stroke="#fff" stroke-width="2"/></svg>
<div class="t" style="left:126.40px;top:766px;font-size:15px;line-height:15px;font-weight:400;color:#444;letter-spacing:-0.253px;">sum(CASE WHEN MemberType='CH' THEN 1 ELSE 0 END)</div>
<div class="r" style="left:560px;top:758px;width:80px;height:33px;border:1px solid #cccccc;border-radius:5px;box-sizing:border-box;background:#fff"></div>
<div class="t" style="left:574.90px;top:768px;font-size:15px;line-height:15px;font-weight:400;color:#5a5a5a;letter-spacing:0.561px;">None</div>
<svg class="r" style="left:624.20px;top:769.00px" width="13.70" height="10.10" viewBox="0 0 13.70 10.10"><path d="M3.00 3.00 L6.85 7.10 L10.70 3.00" fill="none" stroke="#4a4a4a" stroke-width="2.0" stroke-linecap="round" stroke-linejoin="round"/></svg>
<div class="r" style="left:660px;top:758px;width:150px;height:33px;border:1px solid #cccccc;border-radius:5px;box-sizing:border-box;background:#fff"></div>
<div class="t" style="left:671px;top:767px;width:128px;height:20px;overflow:hidden;font-size:15px;line-height:15px;color:#5a5a5a;letter-spacing:0.45px">ChapterMemberCount</div>
<div class="r" style="left:825px;top:758px;width:300px;height:33px;border:1px solid #cccccc;border-radius:5px;box-sizing:border-box;background:#fff"></div>
<div class="r" style="left:1216px;top:758px;width:60px;height:33px;border:1px solid #cccccc;border-radius:5px;box-sizing:border-box;background:#fff"></div>
<div class="t" style="left:1230.50px;top:768px;font-size:15px;line-height:15px;font-weight:400;color:#5a5a5a;letter-spacing:0.758px;">12</div>
<svg class="r" style="left:1260.10px;top:769.00px" width="13.70" height="10.10" viewBox="0 0 13.70 10.10"><path d="M3.00 3.00 L6.85 7.10 L10.70 3.00" fill="none" stroke="#4a4a4a" stroke-width="2.0" stroke-linecap="round" stroke-linejoin="round"/></svg>
<svg class="r" style="left:78px;top:814px" width="13" height="13" viewBox="0 0 13 13"><rect x="0" y="0" width="13" height="13" rx="2" fill="#737373"/><path d="M2.7 7.0 L5.4 9.6 L10.1 3.8" fill="none" stroke="#fff" stroke-width="2"/></svg>
<div class="t" style="left:125.40px;top:803px;font-size:15px;line-height:15px;font-weight:400;color:#444;letter-spacing:0.189px;">FORMAT(dateadd(month,1,dbo.asi_GetAppDatetime()),'yyyy-</div>
<div class="t" style="left:125.40px;top:824px;font-size:15px;line-height:15px;font-weight:400;color:#444;letter-spacing:0.561px;">MM-dd')</div>
<div class="r" style="left:560px;top:805px;width:80px;height:33px;border:1px solid #cccccc;border-radius:5px;box-sizing:border-box;background:#fff"></div>
<div class="t" style="left:574.90px;top:815px;font-size:15px;line-height:15px;font-weight:400;color:#5a5a5a;letter-spacing:0.561px;">None</div>
<svg class="r" style="left:624.20px;top:816.00px" width="13.70" height="10.10" viewBox="0 0 13.70 10.10"><path d="M3.00 3.00 L6.85 7.10 L10.70 3.00" fill="none" stroke="#4a4a4a" stroke-width="2.0" stroke-linecap="round" stroke-linejoin="round"/></svg>
<div class="r" style="left:660px;top:805px;width:150px;height:33px;border:1px solid #cccccc;border-radius:5px;box-sizing:border-box;background:#fff"></div>
<div class="t" style="left:671px;top:814px;width:128px;height:20px;overflow:hidden;font-size:15px;line-height:15px;color:#5a5a5a;letter-spacing:0.45px">OneMonthFromToday</div>
<div class="r" style="left:825px;top:805px;width:300px;height:33px;border:1px solid #cccccc;border-radius:5px;box-sizing:border-box;background:#fff"></div>
<div class="r" style="left:1216px;top:805px;width:60px;height:33px;border:1px solid #cccccc;border-radius:5px;box-sizing:border-box;background:#fff"></div>
<div class="t" style="left:1230.50px;top:815px;font-size:15px;line-height:15px;font-weight:400;color:#5a5a5a;letter-spacing:0.758px;">13</div>
<svg class="r" style="left:1260.10px;top:816.00px" width="13.70" height="10.10" viewBox="0 0 13.70 10.10"><path d="M3.00 3.00 L6.85 7.10 L10.70 3.00" fill="none" stroke="#4a4a4a" stroke-width="2.0" stroke-linecap="round" stroke-linejoin="round"/></svg>
<div class="r" style="left:118px;top:373px;width:703px;height:49px;border:3px solid #f63c40;box-sizing:border-box;box-shadow:0 3px 5px rgba(0,0,0,.36), inset 0 3px 5px rgba(0,0,0,.34), inset 1px 0 4px rgba(0,0,0,.12)"></div>
</body></html>
